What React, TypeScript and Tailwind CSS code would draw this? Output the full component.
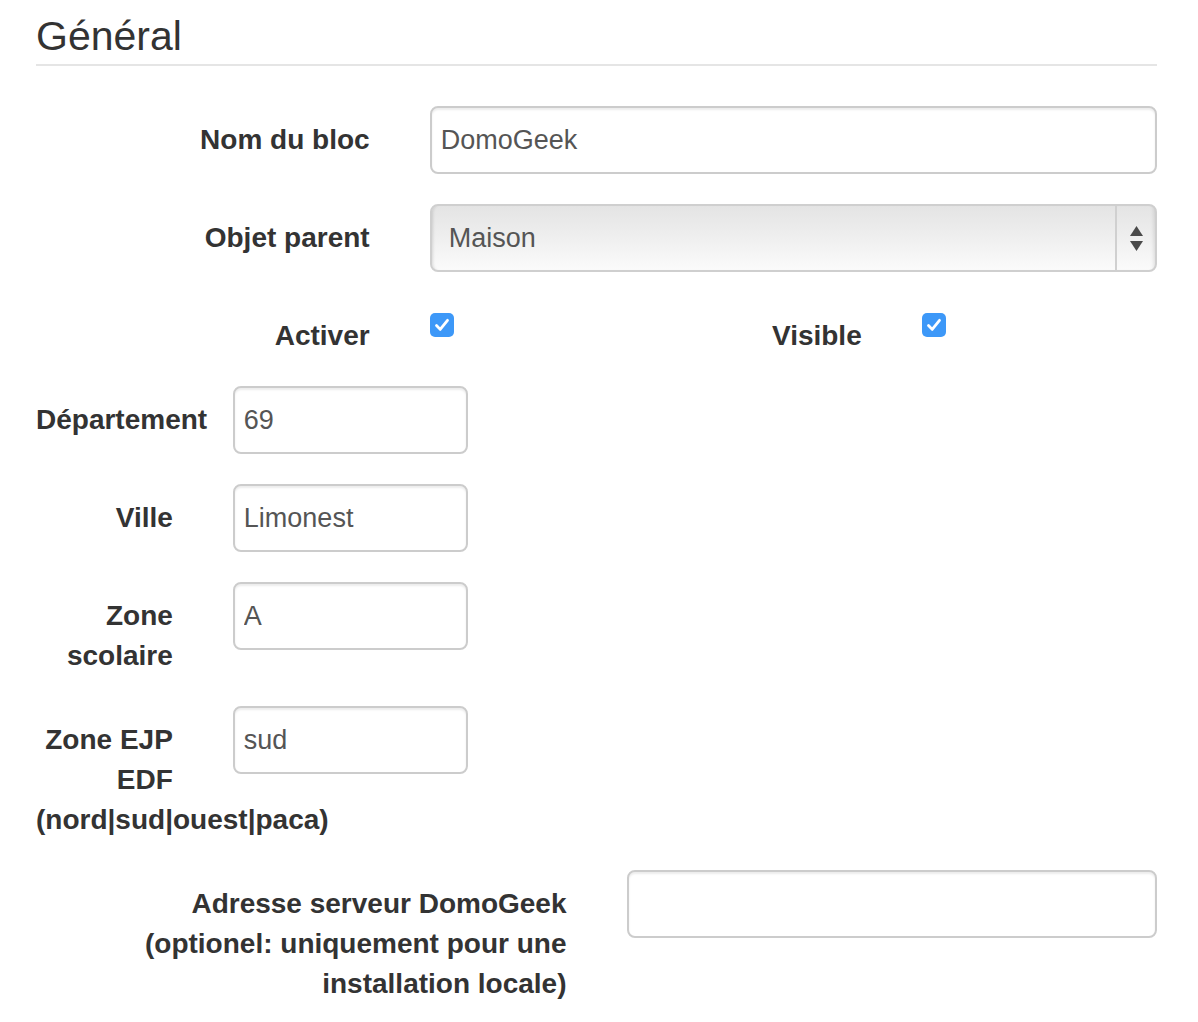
import React from "react";

const labelCls =
  "px-[30px] pt-[14px] text-right text-[28px] leading-[40px] font-bold text-[#333]";
const inputCls =
  "w-full h-[68px] rounded-[8px] border-2 border-[#ccc] bg-white px-[9px] text-[27px] text-[#555] shadow-[inset_0_2px_2px_rgba(0,0,0,0.075)] outline-none";

function TextInput({ value }: { value: string }) {
  return <input className={inputCls} defaultValue={value} readOnly />;
}

function CheckBox() {
  return (
    <div className="w-[24px] h-[24px] rounded-[5px] bg-[#3d98f8] flex items-center justify-center">
      <svg width="24" height="24" viewBox="0 0 24 24" fill="none">
        <path
          d="M6.5 12.5 L10.2 16.4 L17.5 7.3"
          stroke="white"
          strokeWidth="2.8"
          strokeLinecap="round"
          strokeLinejoin="round"
        />
      </svg>
    </div>
  );
}

function SelectBox({ value }: { value: string }) {
  return (
    <div className="flex h-[68px] w-full rounded-[8px] border-2 border-[#cfcfcf] bg-gradient-to-b from-[#e4e4e4] via-[#efefef] to-[#fbfbfb] shadow-[inset_3px_0_3px_-2px_rgba(0,0,0,0.12)] overflow-hidden">
      <div className="flex-1 flex items-center pl-[17px] text-[27px] text-[#555]">
        {value}
      </div>
      <div className="w-[40px] border-l-2 border-[#d0d0d0] flex flex-col items-center justify-center gap-[5px] shadow-[inset_-4px_0_4px_-3px_rgba(0,0,0,0.12)]">
        <svg width="13" height="10" viewBox="0 0 13 10">
          <path d="M6.5 0 L13 10 L0 10 Z" fill="#4a4a4a" />
        </svg>
        <svg width="13" height="10" viewBox="0 0 13 10">
          <path d="M0 0 L13 0 L6.5 10 Z" fill="#4a4a4a" />
        </svg>
      </div>
    </div>
  );
}

export default function App() {
  return (
    <div
      className="min-h-[1022px] bg-white"
      style={{ fontFamily: '"Liberation Sans", Arial, sans-serif' }}
    >
      <div className="ml-[36px] w-[1121px]">
        <div className="pt-[13px] pb-[5px] text-[41px] leading-[46px] text-[#333] border-b-2 border-[#e5e5e5] mb-[40px]">
          Général
        </div>

        <div className="-mx-[30px]">
          <div className="grid grid-cols-12 mb-[30px]">
            <label className={`${labelCls} col-span-4`}>Nom du bloc</label>
            <div className="col-span-8 px-[30px]">
              <TextInput value="DomoGeek" />
            </div>
          </div>

          <div className="grid grid-cols-12 mb-[30px]">
            <label className={`${labelCls} col-span-4`}>Objet parent</label>
            <div className="col-span-8 px-[30px]">
              <SelectBox value="Maison" />
            </div>
          </div>

          <div className="grid grid-cols-12 mb-[30px]">
            <label className={`${labelCls} col-span-4`}>Activer</label>
            <div className="col-span-1 px-[30px] pt-[11px]">
              <CheckBox />
            </div>
            <label className={`${labelCls} col-span-4`}>Visible</label>
            <div className="col-span-1 px-[30px] pt-[11px]">
              <CheckBox />
            </div>
          </div>

          <div className="grid grid-cols-12 mb-[30px]">
            <label className={`${labelCls} col-span-2`}>Département</label>
            <div className="col-span-3 px-[30px]">
              <TextInput value="69" />
            </div>
          </div>

          <div className="grid grid-cols-12 mb-[30px]">
            <label className={`${labelCls} col-span-2`}>Ville</label>
            <div className="col-span-3 px-[30px]">
              <TextInput value="Limonest" />
            </div>
          </div>

          <div className="grid grid-cols-12 mb-[30px]">
            <label className={`${labelCls} col-span-2`}>Zone scolaire</label>
            <div className="col-span-3 px-[30px]">
              <TextInput value="A" />
            </div>
          </div>

          <div className="grid grid-cols-12 mb-[30px]">
            <label className={`${labelCls} col-span-2`}>
              Zone EJP EDF{" "}
              <span className="whitespace-nowrap">(nord|sud|ouest|paca)</span>
            </label>
            <div className="col-span-3 px-[30px]">
              <TextInput value="sud" />
            </div>
          </div>

          <div className="grid grid-cols-12">
            <label className={`${labelCls} col-span-6`}>
              Adresse serveur DomoGeek
              <br />
              (optionel: uniquement pour une installation locale)
            </label>
            <div className="col-span-6 px-[30px]">
              <TextInput value="" />
            </div>
          </div>
        </div>
      </div>
    </div>
  );
}
